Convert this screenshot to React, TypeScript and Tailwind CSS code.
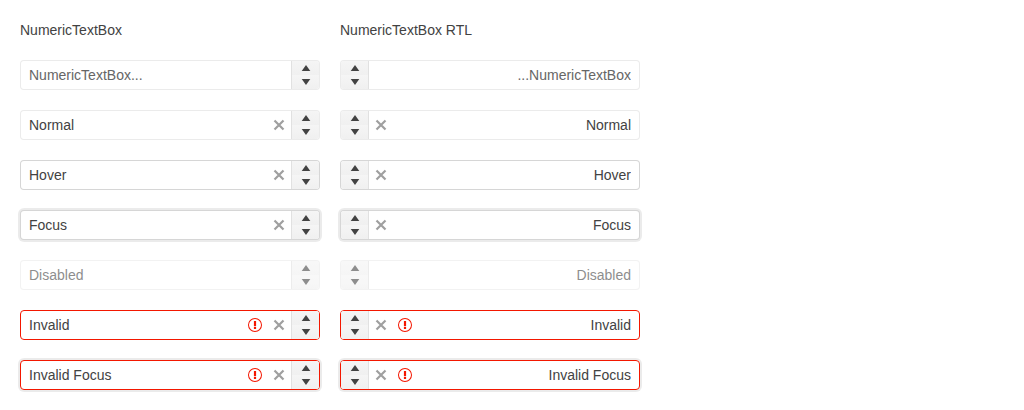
import React, { useId, useState } from "react";

type Status = "placeholder" | "normal" | "hover" | "focus" | "disabled" | "invalid" | "invalidFocus";

interface Row {
  status: Status;
  label: string;
}

const rows: Row[] = [
  { status: "placeholder", label: "" },
  { status: "normal", label: "Normal" },
  { status: "hover", label: "Hover" },
  { status: "focus", label: "Focus" },
  { status: "disabled", label: "Disabled" },
  { status: "invalid", label: "Invalid" },
  { status: "invalidFocus", label: "Invalid Focus" },
];

const frame: Record<Status, string> = {
  placeholder: "border-black/8",
  normal: "border-black/8",
  hover: "border-black/16",
  focus: "border-black/16 ring-2 ring-black/8",
  disabled: "border-black/8 opacity-60",
  invalid: "border-[#f31700]",
  invalidFocus: "border-[#f31700] ring-2 ring-black/8",
};

function CaretUp() {
  return (
    <svg className="size-4 shrink-0" viewBox="0 0 16 16" fill="currentColor" aria-hidden="true">
      <path d="M8 4.9 3.7 11h8.6z" />
    </svg>
  );
}

function CaretDown() {
  return (
    <svg className="size-4 shrink-0" viewBox="0 0 16 16" fill="currentColor" aria-hidden="true">
      <path d="M8 11.1 3.7 5h8.6z" />
    </svg>
  );
}

function ClearIcon() {
  return (
    <svg className="size-4" viewBox="0 0 16 16" fill="none" stroke="currentColor" strokeWidth="2.2" aria-hidden="true">
      <path d="m3.5 3.5 9 9M12.5 3.5l-9 9" />
    </svg>
  );
}

function InvalidIcon() {
  return (
    <svg className="size-4 shrink-0 text-[#f31700]" viewBox="0 0 16 16" fill="currentColor" aria-hidden="true">
      <path
        fillRule="evenodd"
        d="M8 1a7 7 0 1 0 0 14A7 7 0 0 0 8 1zm0 13A6 6 0 1 1 8 2a6 6 0 0 1 0 12z"
      />
      <path d="M6.9 4h2.2v5.2H6.9zM6.9 10h2.2v2H6.9z" />
    </svg>
  );
}

function NumericTextBox({ row, rtl }: { row: Row; rtl: boolean }) {
  const id = useId();
  const [value, setValue] = useState(row.label);
  const { status } = row;
  const disabled = status === "disabled";
  const invalid = status === "invalid" || status === "invalidFocus";
  const clearable = !disabled && value !== "";
  const spin =
    "flex min-h-0 flex-1 items-center bg-linear-to-b from-[#f5f5f5] to-[#f0f0f0] pl-1.5";

  return (
    <div className={`flex h-[30px] overflow-hidden rounded border bg-white ${frame[status]}`}>
      <input
        id={id}
        type="text"
        aria-label={row.label || "NumericTextBox"}
        aria-invalid={invalid}
        placeholder="NumericTextBox..."
        disabled={disabled}
        value={value}
        onChange={(e) => setValue(e.target.value)}
        className="min-w-0 flex-1 bg-transparent px-2 text-sm text-[#424242] outline-none placeholder:text-[#666666]"
      />
      <div className="flex items-center gap-2 px-1">
        {invalid && <InvalidIcon />}
        {clearable && (
          <button type="button" aria-label="Clear" className="opacity-50" onClick={() => setValue("")}>
            <ClearIcon />
          </button>
        )}
      </div>
      <div
        dir="ltr"
        className={`flex w-7 shrink-0 flex-col border-black/8 bg-[#f5f5f5] ${rtl ? "border-r" : "border-l"}`}
      >
        <button type="button" aria-label="Increase" disabled={disabled} className={spin}>
          <CaretUp />
        </button>
        <button type="button" aria-label="Decrease" disabled={disabled} className={spin}>
          <CaretDown />
        </button>
      </div>
    </div>
  );
}

function Column({ title, rtl = false }: { title: string; rtl?: boolean }) {
  return (
    <section className="flex w-full max-w-[300px] flex-col gap-5">
      <h2 className="text-sm">{title}</h2>
      <div dir={rtl ? "rtl" : "ltr"} className="flex flex-col gap-5">
        {rows.map((row) => (
          <NumericTextBox key={row.status} row={row} rtl={rtl} />
        ))}
      </div>
    </section>
  );
}

export default function App() {
  return (
    <main className="flex gap-5 bg-white p-5 font-['Liberation_Sans',Arial,sans-serif] text-[#424242]">
      <Column title="NumericTextBox" />
      <Column title="NumericTextBox RTL" rtl />
    </main>
  );
}
